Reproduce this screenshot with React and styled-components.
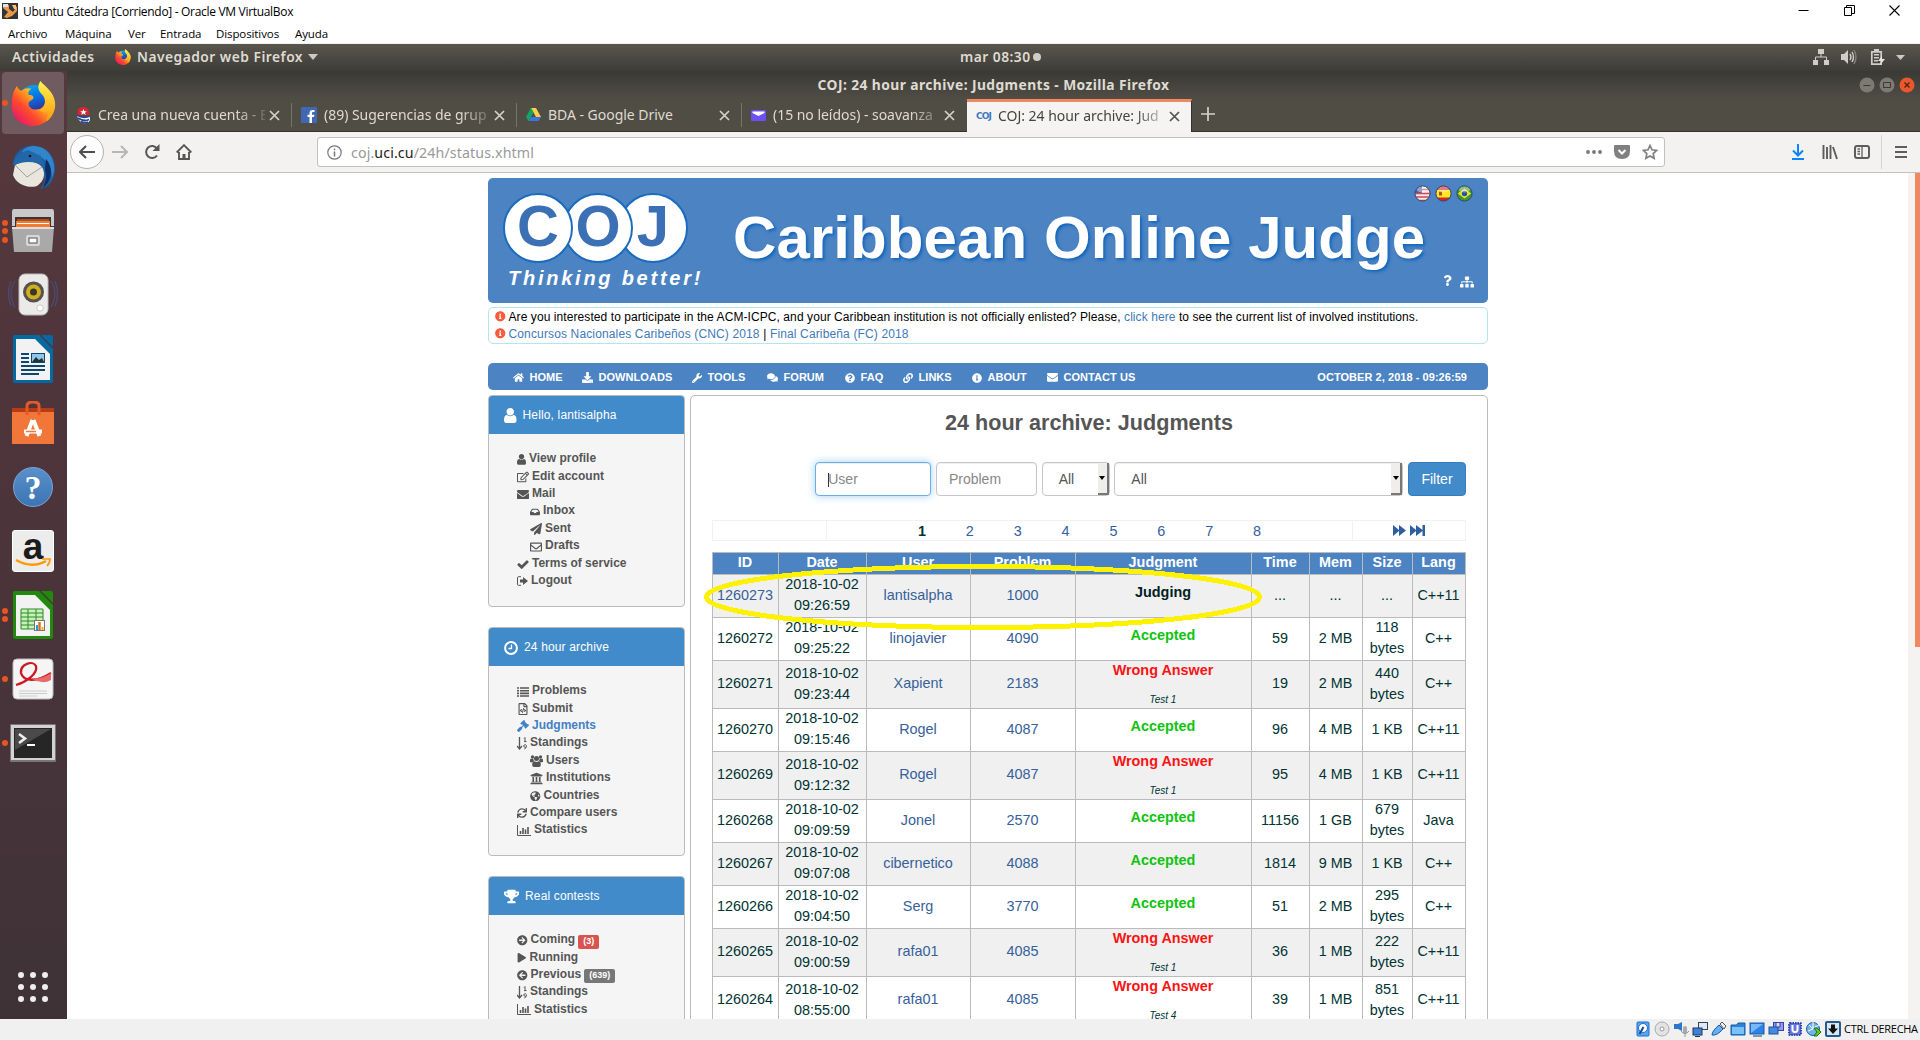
import React from "react";
import styled, { createGlobalStyle, css } from "styled-components";
import {
  FaHome, FaDownload, FaWrench, FaComments, FaQuestionCircle, FaLink, FaInfoCircle,
  FaRegEdit, FaInbox, FaPaperPlane, FaRegEnvelope,
  FaRegFileCode, FaGavel, FaUniversity, FaGlobeAmericas, FaSync,
  FaTrophy, FaArrowCircleRight, FaArrowCircleLeft, FaPlay, FaSitemap, FaQuestion,
} from "react-icons/fa";

const arial = '"Liberation Sans", Arial, sans-serif';
const ubuntu = '"Noto Sans", "Open Sans", sans-serif';
const segoe = '"Open Sans", "Noto Sans", sans-serif';

const Global = createGlobalStyle`
  *, *::before, *::after { box-sizing: border-box; }
  html, body { margin: 0; padding: 0; overflow: hidden; background: #fff; }
  svg { display: block; flex: none; }
`;

const Screen = styled.div`
  width: 1920px;
  height: 1040px;
  display: flex;
  flex-direction: column;
  overflow: hidden;
  font-family: ${arial};
`;

/* ---------- host window ---------- */

const HostTitle = styled.header`
  height: 24px;
  flex: none;
  display: flex;
  align-items: center;
  padding: 0 20px 3px 2px;
  background: #fff;
  font: 12px/20px ${segoe};
  color: #000;
`;
const HostName = styled.span`
  margin-left: 5px;
  flex: 1;
  letter-spacing: -0.31px;
  white-space: nowrap;
  padding-top: 3px;
`;
const HostControls = styled.div`
  display: flex;
  gap: 34.5px;
  align-items: center;
`;
const HostMenu = styled.nav`
  height: 20px;
  flex: none;
  padding-left: 8px;
  display: flex;
  background: #fff;
  border-bottom: 1px solid #f0f0f0;
  font: 11.5px/20px ${segoe};
  color: #000;
  letter-spacing: -0.1px;
`;
const HostMenuItem = styled.span`
  width: ${(p) => p.$w}px;
  white-space: nowrap;
`;
const HostStatus = styled.footer`
  height: 21px;
  flex: none;
  background: #f0f0f0;
  display: flex;
  align-items: center;
  justify-content: flex-end;
  gap: 3px;
  padding: 0 1px 1px 0;
  font: 11px/20px ${segoe};
  color: #000;
`;
const StatusLabel = styled.span`
  width: 75px;
  letter-spacing: -0.3px;
  white-space: nowrap;
`;

/* ---------- guest desktop ---------- */

const TopBar = styled.div`
  height: 27px;
  flex: none;
  display: grid;
  grid-template-columns: 948px auto 1fr;
  align-items: center;
  background: linear-gradient(#59564d, #3d3c38);
  color: #dfdbd2;
  font: 600 13.8px/26px ${ubuntu};
  letter-spacing: 0.48px;
  padding: 0 15px 1px 12px;
`;
const TopLeft = styled.div`
  display: flex;
  align-items: center;
  white-space: nowrap;
`;
const Activities = styled.span`
  width: 103px;
`;
const AppName = styled.span`
  margin: 0 5px 0 6px;
`;
const Clock = styled.div`
  display: flex;
  align-items: center;
  gap: 2px;
  white-space: nowrap;
`;
const Dot = styled.i`
  width: 8px;
  height: 8px;
  border-radius: 50%;
  background: #d0cdc6;
`;
const Tray = styled.div`
  display: flex;
  justify-content: flex-end;
  align-items: center;
  gap: 12.5px;
  svg:last-child { margin-left: -2px; }
`;
const Desktop = styled.div`
  height: 948px;
  flex: none;
  display: flex;
`;
const Dock = styled.aside`
  width: 67px;
  flex: none;
  display: flex;
  flex-direction: column;
  background: linear-gradient(#56393f, #4c343a 45%, #45343a 75%, #3e3236);
`;
const DockItem = styled.div`
  height: 64px;
  flex: none;
  display: flex;
  align-items: center;
  padding-left: 2px;
`;
const DockTile = styled.div`
  width: 62px;
  height: 62px;
  display: flex;
  align-items: center;
  border-radius: 4px;
  background: ${(p) => (p.$active ? "#705b60" : "transparent")};
`;
const Marks = styled.div`
  width: 6px;
  display: flex;
  flex-direction: column;
  gap: 2.5px;
`;
const Mark = styled.i`
  width: 6px;
  height: 6px;
  border-radius: 50%;
  background: #e95420;
`;
const DockIcon = styled.div`
  width: 50px;
  display: flex;
  justify-content: center;
`;
const AppsGrid = styled.div`
  margin: auto 0 17px 18px;
  display: grid;
  grid-template-columns: repeat(3, 6px);
  gap: 6px;
`;
const AppsDot = styled.i`
  height: 6px;
  border-radius: 50%;
  background: #eee;
`;

/* ---------- browser ---------- */

const Browser = styled.main`
  flex: 1;
  min-width: 0;
  display: flex;
  flex-direction: column;
`;
const WindowTitle = styled.div`
  height: 28px;
  flex: none;
  display: grid;
  grid-template-columns: 1fr auto 1fr;
  align-items: center;
  background: linear-gradient(#3a3935, #504d45);
  color: #dfdbd2;
  font: 700 13.8px/28px ${ubuntu};
  letter-spacing: 0.42px;
  padding: 0 5px;
`;
const WindowButtons = styled.div`
  display: flex;
  justify-content: flex-end;
  gap: 4px;
`;
const TabStrip = styled.div`
  height: 33px;
  flex: none;
  display: flex;
  align-items: center;
  background: #504d45;
  border-bottom: 1px solid #33322e;
`;
const Tab = styled.div`
  width: 225px;
  height: 24px;
  display: flex;
  align-items: center;
  padding: 0 11px 0 9px;
  border-right: 1px solid #77746c;
  color: #dfdbd2;
  font: 14px/26px ${ubuntu};
  letter-spacing: -0.03px;
  ${(p) =>
    p.$last &&
    css`
      border-right-color: transparent;
    `}
  ${(p) =>
    p.$active &&
    css`
      height: 33px;
      margin-bottom: -1px;
      border-right: 1px solid #33322e;
      border-top: 3px solid #f08763;
      background: #f5f4f3;
      color: #45433e;
      padding-bottom: 2px;
    `}
`;
const TabText = styled.span`
  flex: 1;
  min-width: 0;
  margin: 0 4px 0 ${(p) => (p.$active ? 6 : 7)}px;
  white-space: nowrap;
  mask-image: ${(p) => (p.$fade ? "linear-gradient(to right, #000 82%, rgba(0,0,0,0.2))" : "none")};
`;
const NewTab = styled.div`
  padding: 0 0 3px 9px;
`;
const Toolbar = styled.div`
  height: 41px;
  flex: none;
  display: flex;
  align-items: center;
  background: #f4f2f1;
  border-bottom: 1px solid #c5c2be;
  padding: 0 12px 0 3px;
`;
const NavButtons = styled.div`
  width: 247px;
  display: flex;
  align-items: center;
`;
const BackButton = styled.div`
  width: 34px;
  height: 34px;
  border: 1px solid #b5b3b0;
  border-radius: 50%;
  background: #fdfdfd;
  display: grid;
  place-items: center;
`;
const NavIcon = styled.div`
  width: 32px;
  display: grid;
  place-items: center;
`;
const UrlBar = styled.div`
  width: 1348px;
  height: 30px;
  display: flex;
  align-items: center;
  background: #fff;
  border: 1px solid #c3c1be;
  border-radius: 3px;
  padding: 0 6px 0 9px;
`;
const Url = styled.span`
  flex: 1;
  margin-left: 9px;
  color: #999;
  font: 14.2px/29px ${ubuntu};
  letter-spacing: 0.12px;
  b { font-weight: 400; color: #222; }
`;
const UrlTools = styled.div`
  display: flex;
  align-items: center;
  gap: 12px;
`;
const RightTools = styled.div`
  flex: 1;
  display: flex;
  justify-content: flex-end;
  align-items: center;
  gap: 16.5px;
`;
const ToolDivider = styled.i`
  width: 1px;
  height: 34px;
  background: #d6d4d1;
  margin: 0 -4px 0 -6px;
`;
const Viewport = styled.div`
  flex: 1;
  min-height: 0;
  display: flex;
  background: #fff;
  overflow: hidden;
`;
const PageArea = styled.div`
  width: 1841px;
  display: flex;
  align-items: flex-start;
  padding-left: 421px;
`;
const Page = styled.div`
  width: 1000px;
  flex: none;
  margin-top: 5px;
`;
const Scroller = styled.div`
  width: 12px;
  background: #f4f3f2;
  display: flex;
  justify-content: flex-end;
`;
const Thumb = styled.i`
  width: 5px;
  height: 474px;
  background: #f08763;
`;

/* ---------- site header ---------- */

const Banner = styled.section`
  height: 125px;
  background: #4b83c3;
  border-radius: 5px;
  display: flex;
  padding-left: 15px;
`;
const Brand = styled.div`
  width: 230px;
  padding-top: 15px;
`;
const Circles = styled.div`
  display: flex;
`;
const Circle = styled.div`
  width: 70px;
  height: 70px;
  border: 2px solid #1c6bbf;
  border-radius: 50%;
  background: #fff;
  position: relative;
  z-index: ${(p) => p.$z};
  margin-right: -${(p) => p.$overlap}px;
  text-align: center;
  font: 700 58px/62px ${arial};
  color: #3c70b4;
`;
const Tagline = styled.div`
  margin: 3px 0 0 5px;
  font: italic 700 20px/24px ${arial};
  letter-spacing: 2.75px;
  color: #fff;
  white-space: nowrap;
`;
const BannerMain = styled.div`
  flex: 1;
  display: flex;
  flex-direction: column;
  color: #fff;
`;
const Flags = styled.div`
  display: flex;
  justify-content: flex-end;
  gap: 4px;
  padding: 7px 15px 0 0;
`;
const SiteTitle = styled.h1`
  margin: 0;
  padding-top: 3px;
  font: 700 60px/66px ${arial};
  letter-spacing: 0.1px;
  text-shadow: 2px 2px 3px #1566bb;
  white-space: nowrap;
`;
const BannerTools = styled.div`
  display: flex;
  justify-content: flex-end;
  gap: 7px;
  padding: 4px 14px 0 0;
`;
const Notice = styled.section`
  height: 37px;
  margin-top: 4px;
  border: 1px solid #b5e5ec;
  border-radius: 5px;
  padding: 0 6px;
  font: 12px/18px ${arial};
  color: #000;
`;
const NoticeLine = styled.div`
  height: 17px;
  display: flex;
  align-items: center;
  gap: 3px;
  white-space: pre;
  letter-spacing: ${(p) => p.$ls}px;
  a { color: #4179b9; }
  svg { color: #fa5b3d; }
`;
const SiteNav = styled.nav`
  height: 27px;
  margin-top: 19px;
  background: #4b83c3;
  border-radius: 5px;
  display: flex;
  align-items: center;
  padding: 0 21px 0 25px;
  color: #fff;
  font: 700 11px/26px ${arial};
  letter-spacing: 0.05px;
`;
const NavEntry = styled.span`
  display: flex;
  align-items: center;
  width: ${(p) => p.$w}px;
  white-space: nowrap;
  svg { margin: 2px 5.5px 0 0; }
`;
const NavDate = styled.span`
  margin-left: auto;
  padding-top: 1px;
`;

/* ---------- columns ---------- */

const Columns = styled.div`
  margin-top: 5px;
  display: flex;
  align-items: flex-start;
  gap: 5px;
`;
const Side = styled.div`
  width: 197px;
  display: flex;
  flex-direction: column;
  gap: 20px;
`;
const Panel = styled.section`
  height: ${(p) => p.$h}px;
  border: 1px solid #bbb;
  border-radius: 4px;
  background: #f5f5f5;
  overflow: hidden;
`;
const PanelHead = styled.div`
  height: 38px;
  display: flex;
  align-items: center;
  gap: 6px;
  padding: 0 0 1px 15px;
  background: #428bca;
  color: #fff;
  font: 12px/16px ${arial};
  letter-spacing: 0.15px;
`;
const PanelIcon = styled.span`
  padding-top: 2px;
`;
const PanelList = styled.div`
  padding: 16px 0 0 28px;
`;
const PanelItem = styled.div`
  height: 17.4px;
  display: flex;
  align-items: center;
  gap: 3px;
  padding-left: ${(p) => (p.$sub ? 13 : 0)}px;
  font: 700 12px/17px ${arial};
  color: ${(p) => (p.$on ? "#4480c6" : "#555")};
  white-space: nowrap;
  svg { margin-top: 2px; }
`;
const Badge = styled.span`
  height: 14px;
  margin-top: 4px;
  padding: 0 5px;
  border-radius: 2px;
  background: ${(p) => p.$c};
  color: #fff;
  font: 700 9px/12px ${arial};
`;
const Content = styled.section`
  width: 798px;
  height: 700px;
  border: 1px solid #bbb;
  border-radius: 5px;
  padding: 0 21px;
  position: relative;
`;
const PageTitle = styled.h2`
  margin: 0;
  padding-top: 13px;
  text-align: center;
  font: 700 21.6px/28px ${arial};
  color: #555;
`;
const Filters = styled.div`
  margin-top: 25px;
  display: flex;
  justify-content: flex-end;
  gap: 4.7px;
`;
const Field = styled.div`
  width: ${(p) => p.$w}px;
  height: 34px;
  display: flex;
  border: 1px solid #c6c6c6;
  border-radius: 4px;
  background: #fff;
  padding-left: ${(p) => p.$pl || 12}px;
  font: 14px/32px ${arial};
  color: ${(p) => (p.$select ? "#555" : "#888")};
  box-shadow: inset 0 1px 1px rgba(0, 0, 0, 0.075);
  ${(p) =>
    p.$focus &&
    css`
      border-color: #66afe9;
      box-shadow: inset 0 1px 1px rgba(0, 0, 0, 0.075), 0 0 8px rgba(102, 175, 233, 0.6);
    `}
`;
const Caret = styled.i`
  width: 1px;
  height: 14px;
  margin: 10px -1px 0 0;
  background: #333;
`;
const SelectArrow = styled.span`
  width: 11px;
  height: 32px;
  margin-left: auto;
  background: #efeeed;
  border: solid #777;
  border-width: 0 2px 2px 0;
  display: grid;
  place-items: center;
`;
const FilterButton = styled.div`
  width: 58px;
  height: 34px;
  border: 1px solid #357ebd;
  border-radius: 4px;
  background: #428bca;
  color: #fff;
  text-align: center;
  font: 14px/32px ${arial};
`;
const Pager = styled.div`
  height: 21px;
  margin-top: 24px;
  display: grid;
  grid-template-columns: 113px 526px 1fr;
  border: 1px solid #f1f1f1;
  font: 14.4px/18px ${arial};
`;
const PagerCell = styled.div`
  display: flex;
  justify-content: center;
  align-items: center;
  gap: ${(p) => p.$gap || 0}px;
  color: #2f5f9e;
  & + & { border-left: 1px solid #f1f1f1; }
`;
const PagerNumber = styled.span`
  width: 47.9px;
  height: 18px;
  text-align: center;
  font-weight: ${(p) => (p.$on ? 700 : 400)};
  color: ${(p) => (p.$on ? "#033" : "#31619f")};
`;
const Table = styled.div`
  margin-top: 11px;
  border: solid #bbb;
  border-width: 1px 0 0 1px;
  font: 14.4px/21px ${arial};
  color: #033;
`;
const Row = styled.div`
  height: ${(p) => p.$h}px;
  display: grid;
  grid-template-columns: 66px 88px 104px 105px 176px 58px 53px 50px 53px;
  grid-template-rows: 100%;
  background: ${(p) => (p.$head ? "#4b83c3" : p.$odd ? "#f0f0f0" : "#fff")};
  ${(p) =>
    p.$head &&
    css`
      color: #fff;
      font-weight: 700;
    `}
`;
const Cell = styled.div`
  display: flex;
  flex-direction: column;
  justify-content: center;
  align-items: center;
  border: solid #bbb;
  border-width: 0 1px 1px 0;
  padding: 0 1px 2px 0;
  white-space: nowrap;
  color: ${(p) => (p.$link ? "#36609a" : "inherit")};
`;
const Verdict = styled.b`
  line-height: 21px;
  margin-bottom: ${(p) => (p.$test ? 12.5 : 5)}px;
  color: ${(p) => p.$c};
`;
const TestNote = styled.i`
  font-size: 10px;
  line-height: 14px;
`;
const Highlight = styled.svg`
  position: absolute;
  left: 12px;
  top: 166px;
`;

/* ---------- drawings ---------- */

const FirefoxLogo = ({ s }) => (
  <svg width={s} height={s} viewBox="0 0 46 46">
    <defs>
      <linearGradient id="ffo" x1="0.9" y1="0.1" x2="0.1" y2="0.9">
        <stop offset="0" stopColor="#fff44f" /><stop offset="0.35" stopColor="#ffb01f" />
        <stop offset="0.65" stopColor="#ff4a2b" /><stop offset="1" stopColor="#e5166f" />
      </linearGradient>
      <linearGradient id="ffb" x1="0" y1="0" x2="0.3" y2="1">
        <stop offset="0" stopColor="#00b4f5" /><stop offset="0.5" stopColor="#0a6ee0" /><stop offset="1" stopColor="#3b1d83" />
      </linearGradient>
      <linearGradient id="ffy" x1="0.5" y1="0" x2="0.5" y2="1">
        <stop offset="0" stopColor="#fff44f" /><stop offset="1" stopColor="#ff980e" />
      </linearGradient>
    </defs>
    <circle cx="24" cy="21" r="17" fill="url(#ffb)" />
    <path d="M6 5c1 3 3 4 5 5 3-3 6-3 10-2-3 2-4 4-3 6 3 0 5 1 5 3-1 3-5 3-5 6 0 5 5 7 9 6 7-1 9-7 8-12l9 2c2 15-8 27-21 27C9 46-1 36 1 22c0-6 1-11 5-17z" fill="url(#ffo)" />
    <path d="M30 0c5 6 14 11 15 22 1 8-3 15-8 19-2-1 2-6 1-10-3 2-7 1-9-1 7-3 7-12 3-16-5-5-5-9-2-14z" fill="url(#ffy)" />
  </svg>
);
const Thunderbird = () => (
  <svg width="46" height="46" viewBox="0 0 46 46">
    <path d="M3 20C4 7 15 0 26 2c13 2 20 13 19 25-1 10-7 17-15 18 4-4 5-8 4-13L22 14z" fill="#1c5fa5" />
    <path d="M12 8C17 0 31 0 38 8c6 7 8 17 4 26 0-13-7-20-16-23-6-2-11-2-14-3z" fill="#2f86cb" />
    <path d="M36 15c8 9 6 22-3 29 3-7 4-12 2-18z" fill="#122c66" />
    <path d="M5 21c8-6 20-5 27 2 4 7 2 14-5 19C18 45 6 40 3 31z" fill="#e9e6dd" />
    <path d="M5 21l12 12 15-10" fill="none" stroke="#a5a195" strokeWidth="1" />
    <path d="M3 22c1-8 8-14 15-16l13 6 4 11c-9-6-21-7-32-1z" fill="#2467a9" /><circle cx="20" cy="12" r="1.3" fill="#081a38" />
  </svg>
);
const Files = () => (
  <svg width="42" height="44" viewBox="0 0 42 44">
    <path d="M2 0h38q2 0 2 3v14H0V3q0-3 2-3z" fill="#c9c9c9" /><path d="M3 8h36v10H3z" fill="#3b3532" />
    <path d="M5 10h32v3H5z" fill="#b54c1e" /><path d="M4 12h34v7H4z" fill="#ee7c35" /><path d="M5 14h32v1H5z" fill="#fff" />
    <path d="M0 18h42l-2 25H2z" fill="#a9a9a9" /><path d="M0 18h42v2H0z" fill="#ddd" />
    <rect x="14" y="26" width="14" height="11" rx="2" fill="#d7d7d7" /><rect x="17" y="29" width="8" height="5" fill="#fff" stroke="#555" />
  </svg>
);
const Speaker = () => (
  <svg width="50" height="46" viewBox="0 0 50 46">
    <path d="M7 9q-8 12 0 26M43 9q8 12 0 26M3 9q-5 13 0 25M47 9q5 13 0 25" fill="none" stroke="#4b4a70" strokeWidth="1.3" />
    <rect x="11" y="2" width="29" height="41" rx="6" fill="#eceae8" stroke="#bbb" />
    <circle cx="25.5" cy="20" r="10.5" fill="#53524f" /><circle cx="25.5" cy="20" r="7.5" fill="#d0ae20" />
    <circle cx="25.5" cy="20" r="3.5" fill="#3a3725" /><circle cx="32" cy="36" r="3.2" fill="#fff" stroke="#ccc" />
  </svg>
);
const OfficeDoc = ({ c, children }) => (
  <svg width="40" height="48" viewBox="0 0 40 48">
    <path d="M2 0h24l14 14v32q0 2-2 2H2q-2 0-2-2V2q0-2 2-2z" fill={c} />
    <path d="M3 4h19l15 15v26H3z" fill="#f2f2f2" />
    <path d="M28 0h10q2 0 2 2v10z" fill={c} />{children}
  </svg>
);
const Bag = () => (
  <svg width="42" height="44" viewBox="0 0 42 44">
    <path d="M0 7h42v6H0z" fill="#b83b14" /><path d="M0 11h42v32H0z" fill="#f07639" />
    <path d="M15 14V5q0-4 6-4t6 4v9" fill="none" stroke="#e35a28" strokeWidth="3" />
    <path d="M20.500 19l-6 16M21.500 19l6 16" fill="none" stroke="#fff" strokeWidth="4" /><path d="M12 30.500h18" stroke="#fff" strokeWidth="4" />
    <path d="M14 30.500h10" stroke="#f07639" strokeWidth="1.500" />
  </svg>
);
const Glyph = styled.div`
  width: ${(p) => p.$w}px;
  height: ${(p) => p.$w}px;
  border-radius: ${(p) => p.$r};
  background: ${(p) => p.$bg};
  border: 1px solid ${(p) => p.$bc};
  color: ${(p) => p.$c};
  display: grid;
  justify-items: center;
  font: ${(p) => p.$font};
`;
const Smile = styled.svg`
  margin-top: -7px;
`;
const Evince = () => (
  <svg width="42" height="43" viewBox="0 0 42 43">
    <rect x="1" y="1" width="40" height="40" rx="4" fill="#f5f5f5" stroke="#bbb" />
    <path d="M4 27C14 24 26 16 24 8 21 2 8 6 9 15c2 8 15 10 30 0" fill="none" stroke="#cf1820" strokeWidth="2.3" />
    <path d="M20 20q9 2 19-5v7q-8 5-19-1z" fill="#e66b6b" /><path d="M7 33h28M7 35.500h28M7 38h18" stroke="#ccc" />
  </svg>
);
const Terminal = () => (
  <svg width="46" height="38" viewBox="0 0 46 38">
    <rect width="46" height="38" rx="1" fill="#777" /><rect x="1" y="1" width="44" height="35" fill="#d4d2d0" />
    <rect x="4" y="4" width="38" height="30" fill="#262626" /><path d="M5 5h36L5 26z" fill="#4a4a4a" />
    <path d="M9 10l6 4.500-6 4.500" fill="none" stroke="#eee" strokeWidth="2.600" /><path d="M17 21h8" stroke="#fff" strokeWidth="2" />
  </svg>
);

const dock = [
  { marks: 1, active: true, icon: <FirefoxLogo s={45} /> },
  { marks: 0, icon: <Thunderbird /> },
  { marks: 3, icon: <Files /> },
  { marks: 0, icon: <Speaker /> },
  {
    marks: 0,
    icon: (
      <OfficeDoc c="#0369a3">
        <path d="M8 19h8M8 23h8M8 27h8M8 31h24M8 35h24M8 39h18" stroke="#0b4770" strokeWidth="2" />
        <rect x="18.500" y="18.500" width="13" height="9" fill="#8fc6ea" stroke="#0b4770" /><path d="M19 27l4-5 3 3 3-2 2 4z" fill="#233" />
      </OfficeDoc>
    ),
  },
  { marks: 0, icon: <Bag /> },
  { marks: 0, icon: <Glyph $w={40} $r="50%" $bg="linear-gradient(#5a8fcb,#3b75b3)" $bc="#7ba5d4" $c="#fff" $font={`700 34px/39px "Liberation Serif", serif`}>?</Glyph> },
  {
    marks: 0,
    icon: (
      <Glyph $w={42} $r="3px" $bg="#ececec" $bc="#fff" $c="#1c1c1c" $font={`700 37px/32px ${arial}`}>
        a
        <Smile width="38" height="12" viewBox="0 0 38 12">
          <path d="M2 2q16 9 30 1" fill="none" stroke="#f90" strokeWidth="2.400" /><path d="M28 1h8q0 4-3 7" fill="none" stroke="#f90" strokeWidth="1.700" />
        </Smile>
      </Glyph>
    ),
  },
  {
    marks: 2,
    icon: (
      <OfficeDoc c="#1f8a0c">
        <path d="M8 18h22v20H8z" fill="#c8f0bd" stroke="#2e8b22" /><path d="M8 22h22M8 26h22M8 30h22M8 34h22M15 18v20M23 18v20" stroke="#2e8b22" />
        <rect x="21.500" y="29.500" width="10" height="10" fill="#fff" stroke="#777" /><path d="M24 39v-5" stroke="#18a0e0" strokeWidth="2" /><path d="M26.500 39v-8" stroke="#e86a12" strokeWidth="2.400" /><path d="M29.500 39v-3" stroke="#e8b412" strokeWidth="2" />
      </OfficeDoc>
    ),
  },
  { marks: 1, icon: <Evince /> },
  { marks: 1, icon: <Terminal /> },
];

const Cross = ({ c }) => (
  <svg width="11" height="11" viewBox="0 0 11 11"><path d="M1 1l9 9M10 1l-9 9" stroke={c} strokeWidth="1.700" /></svg>
);
const CubaIcon = () => (
  <svg width="15" height="17" viewBox="0 0 15 17">
    <path d="M2 2q5-4 10 0l2 6H1z" fill="#d9262d" /><path d="M7.500 2l1 2.200h2.300L9 5.700l.8 2.300-2.300-1.400L5.200 8 6 5.700 4.200 4.200h2.300z" fill="#fff" />
    <path d="M1 8q6 4 13 1v4q-2 4-7 3-5-2-6-8z" fill="#fff" /><path d="M1 8q6 4 13 1M2 11q6 4 11 1.500M5 14.500q4 2 7 .5" fill="none" stroke="#27468f" strokeWidth="1.700" />
  </svg>
);
const FacebookIcon = () => (
  <svg width="16" height="16" viewBox="0 0 16 16"><rect width="16" height="16" fill="#4267b2" /><path d="M11 16v-6h2l.4-2.300H11V6.300c0-.8.400-1.200 1.300-1.200h1.200V3h-2C9.500 3 8.500 4.100 8.500 6v1.700h-2V10h2v6z" fill="#fff" /></svg>
);
const DriveIcon = () => (
  <svg width="15" height="14" viewBox="0 0 15 14"><path d="M5 0h5l5 9h-5z" fill="#ffcf48" /><path d="M5 0l2.500 4.500L2.500 13 0 9z" fill="#11a861" /><path d="M2.500 13L5 9h10l-2.500 4z" fill="#3777e3" /></svg>
);
const MailIcon = () => (
  <svg width="15" height="11" viewBox="0 0 15 11"><rect width="15" height="11" rx="1" fill="#6a50f5" /><path d="M1.500 1.500h12v1.500L7.500 6 1.500 3z" fill="#fff" /></svg>
);
const CojMark = styled.b`
  width: 16px;
  font: 700 9px/10px "DejaVu Sans", sans-serif;
  letter-spacing: -0.9px;
  color: #3d78bd;
`;

const tabs = [
  { text: "Crea una nueva cuenta - E", icon: <CubaIcon />, fade: true },
  { text: "(89) Sugerencias de grup", icon: <FacebookIcon />, fade: true },
  { text: "BDA - Google Drive", icon: <DriveIcon /> },
  { text: "(15 no leídos) - soavanza", icon: <MailIcon />, last: true, fade: true },
  { text: "COJ: 24 hour archive: Jud", icon: <CojMark>COJ</CojMark>, active: true, fade: true },
];

const UserIcon = ({ w }) => (
  <svg width={w} height={w * 1.2} viewBox="256 128 1280 1536">
    <path fill="currentColor" d="M1536 1399q0 109-62.500 187t-150.500 78h-854q-88 0-150.500-78t-62.500-187q0-85 8.500-160.500t31.500-152 58.500-131 94-89 134.500-34.500q131 128 313 128t313-128q76 0 134.500 34.500t94 89 58.500 131 31.500 152 8.500 160.500zm-256-887q0 159-112.500 271.500t-271.500 112.500-271.500-112.500-112.500-271.500 112.500-271.500 271.500-112.500 271.500 112.500 112.500 271.500z" />
  </svg>
);
const EnvelopeIcon = ({ w }) => (
  <svg width={w} height={w * 0.786} viewBox="0 256 1792 1408">
    <path fill="currentColor" d="M1792 710v794q0 66-47 113t-113 47h-1472q-66 0-113-47t-47-113v-794q44 49 101 87 362 246 497 345 57 42 92.500 65.500t94.500 48 110 24.500h2q51 0 110-24.500t94.500-48 92.500-65.500q170-123 498-345 57-39 100-87zm0-294q0 79-49 151t-122 123q-376 261-468 325-10 7-42.500 31t-54 38.800-52 33.200-57.500 27.800-50 9.200h-2q-23 0-50-9.200t-57.500-27.800-52-33.200-54-38.800-42.500-31q-91-64-262-182.500t-205-142.500q-62-42-117-115.500t-55-136.500q0-78 41.500-130t118.500-52h1472q65 0 112.500 47t47.500 113z" />
  </svg>
);
const CheckIcon = () => (
  <svg width="12" height="9" viewBox="121 294 1550 1228">
    <path fill="currentColor" d="M1671 566q0 40-28 68l-724 724-136 136q-28 28-68 28t-68-28l-136-136-362-362q-28-28-28-68t28-68l136-136q28-28 68-28t68 28l294 295 656-657q28-28 68-28t68 28l136 136q28 28 28 68z" />
  </svg>
);
const UsersIcon = () => (
  <svg width="13" height="12" viewBox="0 0 13 12">
    <g fill="currentColor">
      <circle cx="2.500" cy="2" r="1.700" /><circle cx="10.500" cy="2" r="1.700" /><circle cx="6.500" cy="3.600" r="2.500" />
      <path d="M0 7V5q0-1.200 1.200-1.200h2L4 6 2.600 7.500zM13 7V5q0-1.200-1.200-1.200h-2L9 6l1.400 1.500z" />
      <path d="M4.300 6.200q2.200 1.500 4.400 0 2.100.2 2.100 3.800 0 2-1.800 2H4q-1.800 0-1.800-2 0-3.600 2.100-3.800z" />
    </g>
  </svg>
);
const ChartIcon = () => (
  <svg width="14" height="12" viewBox="0 0 14 12"><path d="M.5 0v10.500H14" fill="none" stroke="currentColor" /><path d="M3.500 9V6M6 9V3M8.500 9V4.500M11 9V2" stroke="currentColor" strokeWidth="1.600" /></svg>
);
const LogoutIcon = () => (
  <svg width="11" height="10" viewBox="0 0 11 10"><path d="M4 .7H1.500q-1 0-1 1v6.600q0 1 1 1H4" fill="none" stroke="currentColor" strokeWidth="1" /><path d="M3 3.500h3V1l5 4-5 4V6.500H3z" fill="currentColor" /></svg>
);
const SortIcon = () => (
  <svg width="10" height="13" viewBox="0 0 10 13"><path d="M2.500 0v11M0 9l2.500 3L5 9" fill="none" stroke="currentColor" strokeWidth="1.300" /><path d="M7 1.500l1-1v4M7 4.600h2.500M9.300 9.500a1.300 1.300 0 1 1 0-1v1q0 2-2 2.500" fill="none" stroke="currentColor" strokeWidth="1" /></svg>
);
const ListIcon = () => (
  <svg width="12" height="10" viewBox="0 0 12 10"><path d="M0 1h2M3 1h9M0 3.700h2M3 3.700h9M0 6.400h2M3 6.400h9M0 9h2M3 9h9" stroke="currentColor" strokeWidth="1.600" /></svg>
);
const ClockIcon = () => (
  <svg width="14" height="14" viewBox="0 0 14 14"><circle cx="7" cy="7" r="5.900" fill="none" stroke="currentColor" strokeWidth="2" /><path d="M7.500 3.500v4H4.500" fill="none" stroke="currentColor" strokeWidth="1.300" /></svg>
);
const NextIcon = () => (
  <svg width="13" height="11" viewBox="0 0 13 11"><path d="M0 0l6 5V0l7 5.500L6 11V6l-6 5z" fill="currentColor" /></svg>
);
const LastIcon = () => (
  <svg width="15" height="11" viewBox="0 0 15 11"><path d="M0 0l6 5V0l6.500 5V0H15v11h-2.500V6L6 11V6l-6 5z" fill="currentColor" /></svg>
);

const panels = [
  {
    title: "Hello, lantisalpha", icon: <UserIcon w={12.5} />, h: 212,
    items: [
      { t: "View profile", i: <UserIcon w={9} /> },
      { t: "Edit account", i: <FaRegEdit size={12} /> },
      { t: "Mail", i: <EnvelopeIcon w={12} /> },
      { t: "Inbox", i: <FaInbox size={10} />, sub: true },
      { t: "Sent", i: <FaPaperPlane size={12} />, sub: true },
      { t: "Drafts", i: <FaRegEnvelope size={12} />, sub: true },
      { t: "Terms of service", i: <CheckIcon /> },
      { t: "Logout", i: <LogoutIcon /> },
    ],
  },
  {
    title: "24 hour archive", icon: <ClockIcon />, h: 229,
    items: [
      { t: "Problems", i: <ListIcon /> },
      { t: "Submit", i: <FaRegFileCode size={12} /> },
      { t: "Judgments", i: <FaGavel size={12} />, on: true },
      { t: "Standings", i: <SortIcon /> },
      { t: "Users", i: <UsersIcon />, sub: true },
      { t: "Institutions", i: <FaUniversity size={13} />, sub: true },
      { t: "Countries", i: <FaGlobeAmericas size={10.5} />, sub: true },
      { t: "Compare users", i: <FaSync size={10} /> },
      { t: "Statistics", i: <ChartIcon /> },
    ],
  },
  {
    title: "Real contests", icon: <FaTrophy size={15} />, h: 229,
    items: [
      { t: "Coming", i: <FaArrowCircleRight size={10.5} />, badge: "(3)", c: "#d9534f" },
      { t: "Running", i: <FaPlay size={9.5} /> },
      { t: "Previous", i: <FaArrowCircleLeft size={10.5} />, badge: "(639)", c: "#777" },
      { t: "Standings", i: <SortIcon /> },
      { t: "Statistics", i: <ChartIcon /> },
    ],
  },
];

const navEntries = [
  ["HOME", <FaHome size={11} />, 69],
  ["DOWNLOADS", <FaDownload size={11} />, 110],
  ["TOOLS", <FaWrench size={10} />, 75],
  ["FORUM", <FaComments size={11} />, 78],
  ["FAQ", <FaQuestionCircle size={10} />, 58],
  ["LINKS", <FaLink size={10} />, 69],
  ["ABOUT", <FaInfoCircle size={10} />, 75],
  ["CONTACT US", <EnvelopeIcon w={11} />, 100],
];

const rows = [
  ["1260273", "09:26:59", "lantisalpha", "1000", "Judging", "...", "...", "...", "C++11"],
  ["1260272", "09:25:22", "linojavier", "4090", "Accepted", "59", "2 MB", "118 bytes", "C++"],
  ["1260271", "09:23:44", "Xapient", "2183", "Wrong Answer", "19", "2 MB", "440 bytes", "C++", "Test 1"],
  ["1260270", "09:15:46", "Rogel", "4087", "Accepted", "96", "4 MB", "1 KB", "C++11"],
  ["1260269", "09:12:32", "Rogel", "4087", "Wrong Answer", "95", "4 MB", "1 KB", "C++11", "Test 1"],
  ["1260268", "09:09:59", "Jonel", "2570", "Accepted", "11156", "1 GB", "679 bytes", "Java"],
  ["1260267", "09:07:08", "cibernetico", "4088", "Accepted", "1814", "9 MB", "1 KB", "C++"],
  ["1260266", "09:04:50", "Serg", "3770", "Accepted", "51", "2 MB", "295 bytes", "C++"],
  ["1260265", "09:00:59", "rafa01", "4085", "Wrong Answer", "36", "1 MB", "222 bytes", "C++11", "Test 1"],
  ["1260264", "08:55:00", "rafa01", "4085", "Wrong Answer", "39", "1 MB", "851 bytes", "C++11", "Test 4"],
];
const verdictColor = { Judging: "#022", Accepted: "#0fc40f", "Wrong Answer": "#fa1414" };
const headings = ["ID", "Date", "User", "Problem", "Judgment", "Time", "Mem", "Size", "Lang"];

const Submission = ({ row, index }) => {
  const [id, time, user, problem, verdict, ms, mem, size, lang, test] = row;
  return (
    <Row $h={test ? 48 : 43} $odd={index % 2 === 0}>
      <Cell $link={index === 0}>{id}</Cell>
      <Cell><span>2018-10-02</span><span>{time}</span></Cell>
      <Cell $link>{user}</Cell>
      <Cell $link>{problem}</Cell>
      <Cell>
        <Verdict $c={verdictColor[verdict]} $test={test}>{verdict}</Verdict>
        {test && <TestNote>{test}</TestNote>}
      </Cell>
      <Cell>{ms}</Cell>
      <Cell>{mem}</Cell>
      <Cell>{size.endsWith("bytes") ? size.split(" ").map((s) => <span key={s}>{s}</span>) : size}</Cell>
      <Cell>{lang}</Cell>
    </Row>
  );
};

const Flag = ({ kind }) => (
  <svg width="17" height="17" viewBox="0 0 17 17">
    <clipPath id={"clip" + kind}><circle cx="8.500" cy="8.500" r="7.500" /></clipPath>
    <g clipPath={`url(#clip${kind})`}>
      {kind === "us" && (<><path d="M0 0h17v17H0z" fill="#f3e9ec" /><path d="M0 4.500h17M0 8.500h17M0 12h17M0 15.500h17" stroke="#d2464f" strokeWidth="1.700" /><path d="M0 0h8v8H0z" fill="#4a62a8" /></>)}
      {kind === "es" && (<><path d="M0 0h17v17H0z" fill="#d8222b" /><path d="M0 5h17v7.500H0z" fill="#fbe81e" /><path d="M4 6.500h3v4H4z" fill="#b5501c" /></>)}
      {kind === "br" && (<><path d="M0 0h17v17H0z" fill="#3d9a32" /><path d="M8.500 3.500L15 8.500l-6.500 5-6.500-5z" fill="#f3e32b" /><circle cx="8.500" cy="8.500" r="2.700" fill="#2355a5" /></>)}
      <ellipse cx="8.500" cy="4" rx="6" ry="3.500" fill="#fff" opacity="0.4" />
    </g>
    <circle cx="8.500" cy="8.500" r="7.600" fill="none" stroke="#3d4660" strokeWidth="1" />
  </svg>
);

const SelectCaret = () => (
  <svg width="6" height="4" viewBox="0 0 6 4"><path d="M0 0h6L3 4z" fill="#000" /></svg>
);

const StatusIcons = () => {
  const b = "#1c6fd0";
  return (
    <>
      <svg width="16" height="16" viewBox="0 0 16 16"><rect x="2" y="1" width="12" height="14" rx="1" fill="#58a5ee" stroke={b} /><circle cx="8" cy="7" r="4.500" fill="#fff" stroke={b} /><path d="M4.500 13l4-7" stroke="#114a92" strokeWidth="2" /></svg>
      <svg width="16" height="16" viewBox="0 0 16 16"><circle cx="8" cy="8" r="7" fill="#e3e3e3" stroke="#aaa" /><circle cx="8" cy="8" r="2" fill="#fff" stroke="#999" /></svg>
      <svg width="16" height="16" viewBox="0 0 16 16"><path d="M1 3h4l4-2v9L5 8H1z" fill="#2b77cc" /><rect x="10" y="5" width="4" height="8" rx="2" fill="#aaa" /><path d="M8 10q4 5 8 0M12 13v3" stroke="#999" fill="none" /></svg>
      <svg width="16" height="16" viewBox="0 0 16 16"><rect x="6.500" y="1.500" width="9" height="7" fill="#dce9f8" stroke="#345" /><rect x="1" y="7" width="9" height="7" fill="#3b82dc" stroke="#235" /><path d="M3 15.500h5" stroke="#234" /></svg>
      <svg width="16" height="16" viewBox="0 0 16 16"><path d="M1 14q0-4 7-10l4 4q-6 7-11 6z" fill="#68aef2" stroke="#185ca8" /><path d="M9 3l2-2 4 4-2 3z" fill="#eee" stroke="#555" /></svg>
      <svg width="16" height="16" viewBox="0 0 16 16"><path d="M1 4h6l1-2h7v12H1z" fill="#2c82dd" stroke="#155da9" /><path d="M2 6h12v7H2z" fill="#79c1f8" /></svg>
      <svg width="16" height="16" viewBox="0 0 16 16"><rect x="1" y="2" width="14" height="11" fill="#2c82e8" stroke="#1758a8" /><path d="M2 3h12L2 12z" fill="#76b8fa" /><path d="M4 15h9" stroke="#678" strokeWidth="1.500" /></svg>
      <svg width="16" height="16" viewBox="0 0 16 16"><rect x="5.500" y="1.500" width="10" height="8" fill="#8e9cf0" stroke="#3840a8" /><rect x="1" y="6" width="9" height="7" fill="#428ae4" stroke="#23509a" /><path d="M8 2v4h4V2" fill="#dde" stroke="#3840a8" /></svg>
      <svg width="16" height="16" viewBox="0 0 16 16"><rect x="2" y="2" width="12" height="12" rx="1" fill="#6476dc" stroke="#3340a8" strokeDasharray="1.500 1" strokeWidth="2" /><path d="M5.500 4v4.500q0 2.500 2.500 2.500t2.500-2.500V4" fill="none" stroke="#fff" strokeWidth="2" /></svg>
      <svg width="16" height="16" viewBox="0 0 16 16"><circle cx="7" cy="8" r="6.500" fill="#6db3ee" stroke="#245c9c" /><path d="M3 4l4 4-5 2M7 1v6l6-3" stroke="#fff" fill="none" /><path d="M8 7h3l4 4-4 4H8l3-4z" fill="#5bcb2c" stroke="#23700f" /></svg>
      <svg width="16" height="16" viewBox="0 0 16 16"><rect x="1" y="1" width="14" height="14" rx="1" fill="#d7e7f5" stroke="#27598c" strokeWidth="2" /><path d="M6 3.500h4v4h3l-5 5.500-5-5.500h3z" fill="#111" /></svg>
    </>
  );
};

export default function App() {
  return (
    <Screen>
      <Global />
      <HostTitle>
        <svg width="16" height="16" viewBox="0 0 16 16"><rect width="16" height="16" fill="#33343a" /><path d="M1 2h6v4l4 3 4-6v5l-5 5-5 2-3-1 4-5-5-4z" fill="#e79a45" /><path d="M1 1h5v3H1z" fill="#dbe4ee" /><path d="M10 2h4v4h-2z" fill="#f3c37c" /></svg>
        <HostName>Ubuntu Cátedra [Corriendo] - Oracle VM VirtualBox</HostName>
        <HostControls>
          <svg width="11" height="11" viewBox="0 0 11 11"><path d="M.5 5.500h10" stroke="#000" /></svg>
          <svg width="11" height="11" viewBox="0 0 11 11"><path d="M.5 2.500h7v8h-7zM2.500 2.500v-2h8v8h-3" fill="none" stroke="#000" /></svg>
          <svg width="11" height="11" viewBox="0 0 11 11"><path d="M.5.500l10 10M10.500.500l-10 10" stroke="#000" strokeWidth="1.100" /></svg>
        </HostControls>
      </HostTitle>
      <HostMenu>
        <HostMenuItem $w={57}>Archivo</HostMenuItem>
        <HostMenuItem $w={63}>Máquina</HostMenuItem>
        <HostMenuItem $w={32}>Ver</HostMenuItem>
        <HostMenuItem $w={56}>Entrada</HostMenuItem>
        <HostMenuItem $w={79}>Dispositivos</HostMenuItem>
        <HostMenuItem $w={60}>Ayuda</HostMenuItem>
      </HostMenu>

      <TopBar>
        <TopLeft>
          <Activities>Actividades</Activities>
          <FirefoxLogo s={16} />
          <AppName>Navegador web Firefox</AppName>
          <svg width="10" height="6" viewBox="0 0 10 6"><path d="M0 0h10L5 6z" fill="#ccc9c1" /></svg>
        </TopLeft>
        <Clock>mar 08:30<Dot /></Clock>
        <Tray>
          <svg width="16" height="16" viewBox="0 0 16 16"><path d="M5 0h6v5H5zM0 11h5v5H0zM11 11h5v5h-5z" fill="#d0cdc6" /><path d="M8 5v3M2.500 11V8h11v3" fill="none" stroke="#d0cdc6" /></svg>
          <svg width="16" height="16" viewBox="0 0 16 16"><path d="M0 5h3l4-4v14l-4-4H0z" fill="#d0cdc6" /><path d="M9 5q2 3 0 6M11 3q3 5 0 10" fill="none" stroke="#d0cdc6" strokeWidth="1.400" /><path d="M13 1q4 7 0 14" fill="none" stroke="#85827a" strokeWidth="1.400" /></svg>
          <svg width="16" height="16" viewBox="0 0 16 16"><path d="M1.800 2.800h9.400v12.400H1.800z" fill="none" stroke="#d0cdc6" strokeWidth="1.700" /><path d="M4 0h5v3H4zM4 5h5v1.500H4zM4 8h5v1.500H4zM4 11h4v1.500H4z" fill="#d0cdc6" /><path d="M12 7l-4 5h3l-1 4 5-6h-3z" fill="#e8e5dd" /></svg>
          <svg width="9" height="5" viewBox="0 0 9 5"><path d="M0 0h9L4.500 5z" fill="#ccc9c1" /></svg>
        </Tray>
      </TopBar>

      <Desktop>
        <Dock>
          {dock.map((d, i) => (
            <DockItem key={i}>
              <DockTile $active={d.active}>
                <Marks>{Array.from({ length: d.marks }, (_, k) => <Mark key={k} />)}</Marks>
                <DockIcon>{d.icon}</DockIcon>
              </DockTile>
            </DockItem>
          ))}
          <AppsGrid>{Array.from({ length: 9 }, (_, k) => <AppsDot key={k} />)}</AppsGrid>
        </Dock>

        <Browser>
          <WindowTitle>
            <span />
            <span>COJ: 24 hour archive: Judgments - Mozilla Firefox</span>
            <WindowButtons>
              <svg width="16" height="16" viewBox="0 0 16 16"><circle cx="8" cy="8" r="7.500" fill="#7d7a72" /><path d="M4.500 8.500h7" stroke="#3a3935" /></svg>
              <svg width="16" height="16" viewBox="0 0 16 16"><circle cx="8" cy="8" r="7.500" fill="#7d7a72" /><path d="M4.500 5.500h7v5h-7z" fill="none" stroke="#3a3935" /></svg>
              <svg width="16" height="16" viewBox="0 0 16 16"><circle cx="8" cy="8" r="7.500" fill="#e9572c" /><path d="M5.500 5.500l5 5M10.500 5.500l-5 5" stroke="#4a2416" strokeWidth="1.300" /></svg>
            </WindowButtons>
          </WindowTitle>
          <TabStrip>
            {tabs.map((t) => (
              <Tab key={t.text} $active={t.active} $last={t.last}>
                {t.icon}
                <TabText $fade={t.fade} $active={t.active}>{t.text}</TabText>
                <Cross c={t.active ? "#55534e" : "#d5d2ca"} />
              </Tab>
            ))}
            <NewTab><svg width="14" height="14" viewBox="0 0 14 14"><path d="M7 0v14M0 7h14" stroke="#d5d2ca" strokeWidth="1.700" /></svg></NewTab>
          </TabStrip>
          <Toolbar>
            <NavButtons>
              <BackButton><svg width="16" height="14" viewBox="0 0 16 14"><path d="M16 7H1.500M7 1L1 7l6 6" fill="none" stroke="#4f4e4c" strokeWidth="2" /></svg></BackButton>
              <NavIcon><svg width="16" height="14" viewBox="0 0 16 14"><path d="M0 7h14.500M9 1l6 6-6 6" fill="none" stroke="#b9b7b5" strokeWidth="2" /></svg></NavIcon>
              <NavIcon><svg width="16" height="16" viewBox="0 0 16 16"><path d="M13 11.500A6 6 0 1 1 13 4.500" fill="none" stroke="#565553" strokeWidth="2" /><path d="M15.500 0v7H8.500z" fill="#565553" /></svg></NavIcon>
              <NavIcon><svg width="16" height="16" viewBox="0 0 16 16"><path d="M.7 8.500L8 1.200l7.300 7.300M3 8v7h10V8" fill="none" stroke="#565553" strokeWidth="1.900" /><path d="M6.500 15v-5h3v5z" fill="#565553" /></svg></NavIcon>
            </NavButtons>
            <UrlBar>
              <svg width="15" height="15" viewBox="0 0 15 15"><circle cx="7.500" cy="7.500" r="6.700" fill="none" stroke="#777" strokeWidth="1.200" /><path d="M7.500 6.500v5M7.500 3.500v1.700" stroke="#777" strokeWidth="1.500" /></svg>
              <Url>coj.<b>uci.cu</b>/24h/status.xhtml</Url>
              <UrlTools>
                <svg width="16" height="4" viewBox="0 0 16 4"><circle cx="2" cy="2" r="1.900" fill="#777" /><circle cx="8" cy="2" r="1.900" fill="#777" /><circle cx="14" cy="2" r="1.900" fill="#777" /></svg>
                <svg width="16" height="14" viewBox="0 0 16 14"><path d="M1 0h14q1 0 1 1v5q0 8-8 8T0 6V1q0-1 1-1z" fill="#808080" /><path d="M4.500 5L8 8.500 11.500 5" fill="none" stroke="#fff" strokeWidth="2" /></svg>
                <svg width="16" height="16" viewBox="0 0 16 16"><path d="M8 1.500l2 4.300 4.700.6-3.500 3.200.9 4.700L8 12l-4.100 2.300.9-4.700L1.300 6.400l4.700-.6z" fill="none" stroke="#808080" strokeWidth="1.700" /></svg>
              </UrlTools>
            </UrlBar>
            <RightTools>
              <svg width="14" height="16" viewBox="0 0 14 16"><path d="M7 0v11M2 6.500l5 5 5-5M1 15h12" fill="none" stroke="#0a84ff" strokeWidth="2" /></svg>
              <svg width="16" height="16" viewBox="0 0 16 16"><path d="M1.500 1v14M5 3v12M8.500 1v14M11 3l4 12" fill="none" stroke="#5e5d5b" strokeWidth="1.900" /></svg>
              <svg width="16" height="14" viewBox="0 0 16 14"><rect x="1" y="1" width="14" height="12" rx="2" fill="none" stroke="#5e5d5b" strokeWidth="2" /><path d="M8 1v12M3.500 4H6M3.500 6.500H6M3.500 9H6" stroke="#5e5d5b" strokeWidth="1.300" /></svg>
              <ToolDivider />
              <svg width="14" height="12" viewBox="0 0 14 12"><path d="M1 1h12M1 6h12M1 11h12" stroke="#5e5d5b" strokeWidth="2" /></svg>
            </RightTools>
          </Toolbar>

          <Viewport>
            <PageArea>
              <Page>
                <Banner>
                  <Brand>
                    <Circles>
                      <Circle $z={3} $overlap={10}>C</Circle>
                      <Circle $z={2} $overlap={15}>O</Circle>
                      <Circle $z={1} $overlap={0}>J</Circle>
                    </Circles>
                    <Tagline>Thinking better!</Tagline>
                  </Brand>
                  <BannerMain>
                    <Flags><Flag kind="us" /><Flag kind="es" /><Flag kind="br" /></Flags>
                    <SiteTitle>Caribbean Online Judge</SiteTitle>
                    <BannerTools><FaQuestion size={11} /><FaSitemap size={14} /></BannerTools>
                  </BannerMain>
                </Banner>
                <Notice>
                  <NoticeLine $ls={0.08}><FaInfoCircle size={10.5} /><span>Are you interested to participate in the ACM-ICPC, and your Caribbean institution is not officially enlisted? Please, <a>click here</a> to see the current list of involved institutions.</span></NoticeLine>
                  <NoticeLine $ls={0.14}><FaInfoCircle size={10.5} /><span><a>Concursos Nacionales Caribeños (CNC) 2018</a> | <a>Final Caribeña (FC) 2018</a></span></NoticeLine>
                </Notice>
                <SiteNav>
                  {navEntries.map(([t, icon, w]) => (
                    <NavEntry key={t} $w={w}>{icon}{t}</NavEntry>
                  ))}
                  <NavDate>OCTOBER 2, 2018 - 09:26:59</NavDate>
                </SiteNav>
                <Columns>
                  <Side>
                    {panels.map((p) => (
                      <Panel key={p.title} $h={p.h}>
                        <PanelHead><PanelIcon>{p.icon}</PanelIcon>{p.title}</PanelHead>
                        <PanelList>
                          {p.items.map((it) => (
                            <PanelItem key={it.t} $sub={it.sub} $on={it.on}>
                              {it.i}{it.t}
                              {it.badge && <Badge $c={it.c}>{it.badge}</Badge>}
                            </PanelItem>
                          ))}
                        </PanelList>
                      </Panel>
                    ))}
                  </Side>
                  <Content>
                    <PageTitle>24 hour archive: Judgments</PageTitle>
                    <Filters>
                      <Field $w={116} $focus><Caret />User</Field>
                      <Field $w={101}>Problem</Field>
                      <Field $w={68} $select $pl={16}>All<SelectArrow><SelectCaret /></SelectArrow></Field>
                      <Field $w={289} $select $pl={16}>All<SelectArrow><SelectCaret /></SelectArrow></Field>
                      <FilterButton>Filter</FilterButton>
                    </Filters>
                    <Pager>
                      <PagerCell />
                      <PagerCell>
                        {[1, 2, 3, 4, 5, 6, 7, 8].map((n) => <PagerNumber key={n} $on={n === 1}>{n}</PagerNumber>)}
                      </PagerCell>
                      <PagerCell $gap={4}><NextIcon /><LastIcon /></PagerCell>
                    </Pager>
                    <Table>
                      <Row $head $h={22}>{headings.map((h) => <Cell key={h}>{h}</Cell>)}</Row>
                      {rows.map((r, i) => <Submission key={r[0]} row={r} index={i} />)}
                    </Table>
                    <Highlight width="560" height="70" viewBox="0 0 560 70" shapeRendering="crispEdges">
                      <ellipse cx="280" cy="35" rx="276.500" ry="30.500" fill="none" stroke="#fff200" strokeWidth="5" />
                    </Highlight>
                  </Content>
                </Columns>
              </Page>
            </PageArea>
            <Scroller><Thumb /></Scroller>
          </Viewport>
        </Browser>
      </Desktop>
      <HostStatus>
        <StatusIcons />
        <StatusLabel>CTRL DERECHA</StatusLabel>
      </HostStatus>
    </Screen>
  );
}
